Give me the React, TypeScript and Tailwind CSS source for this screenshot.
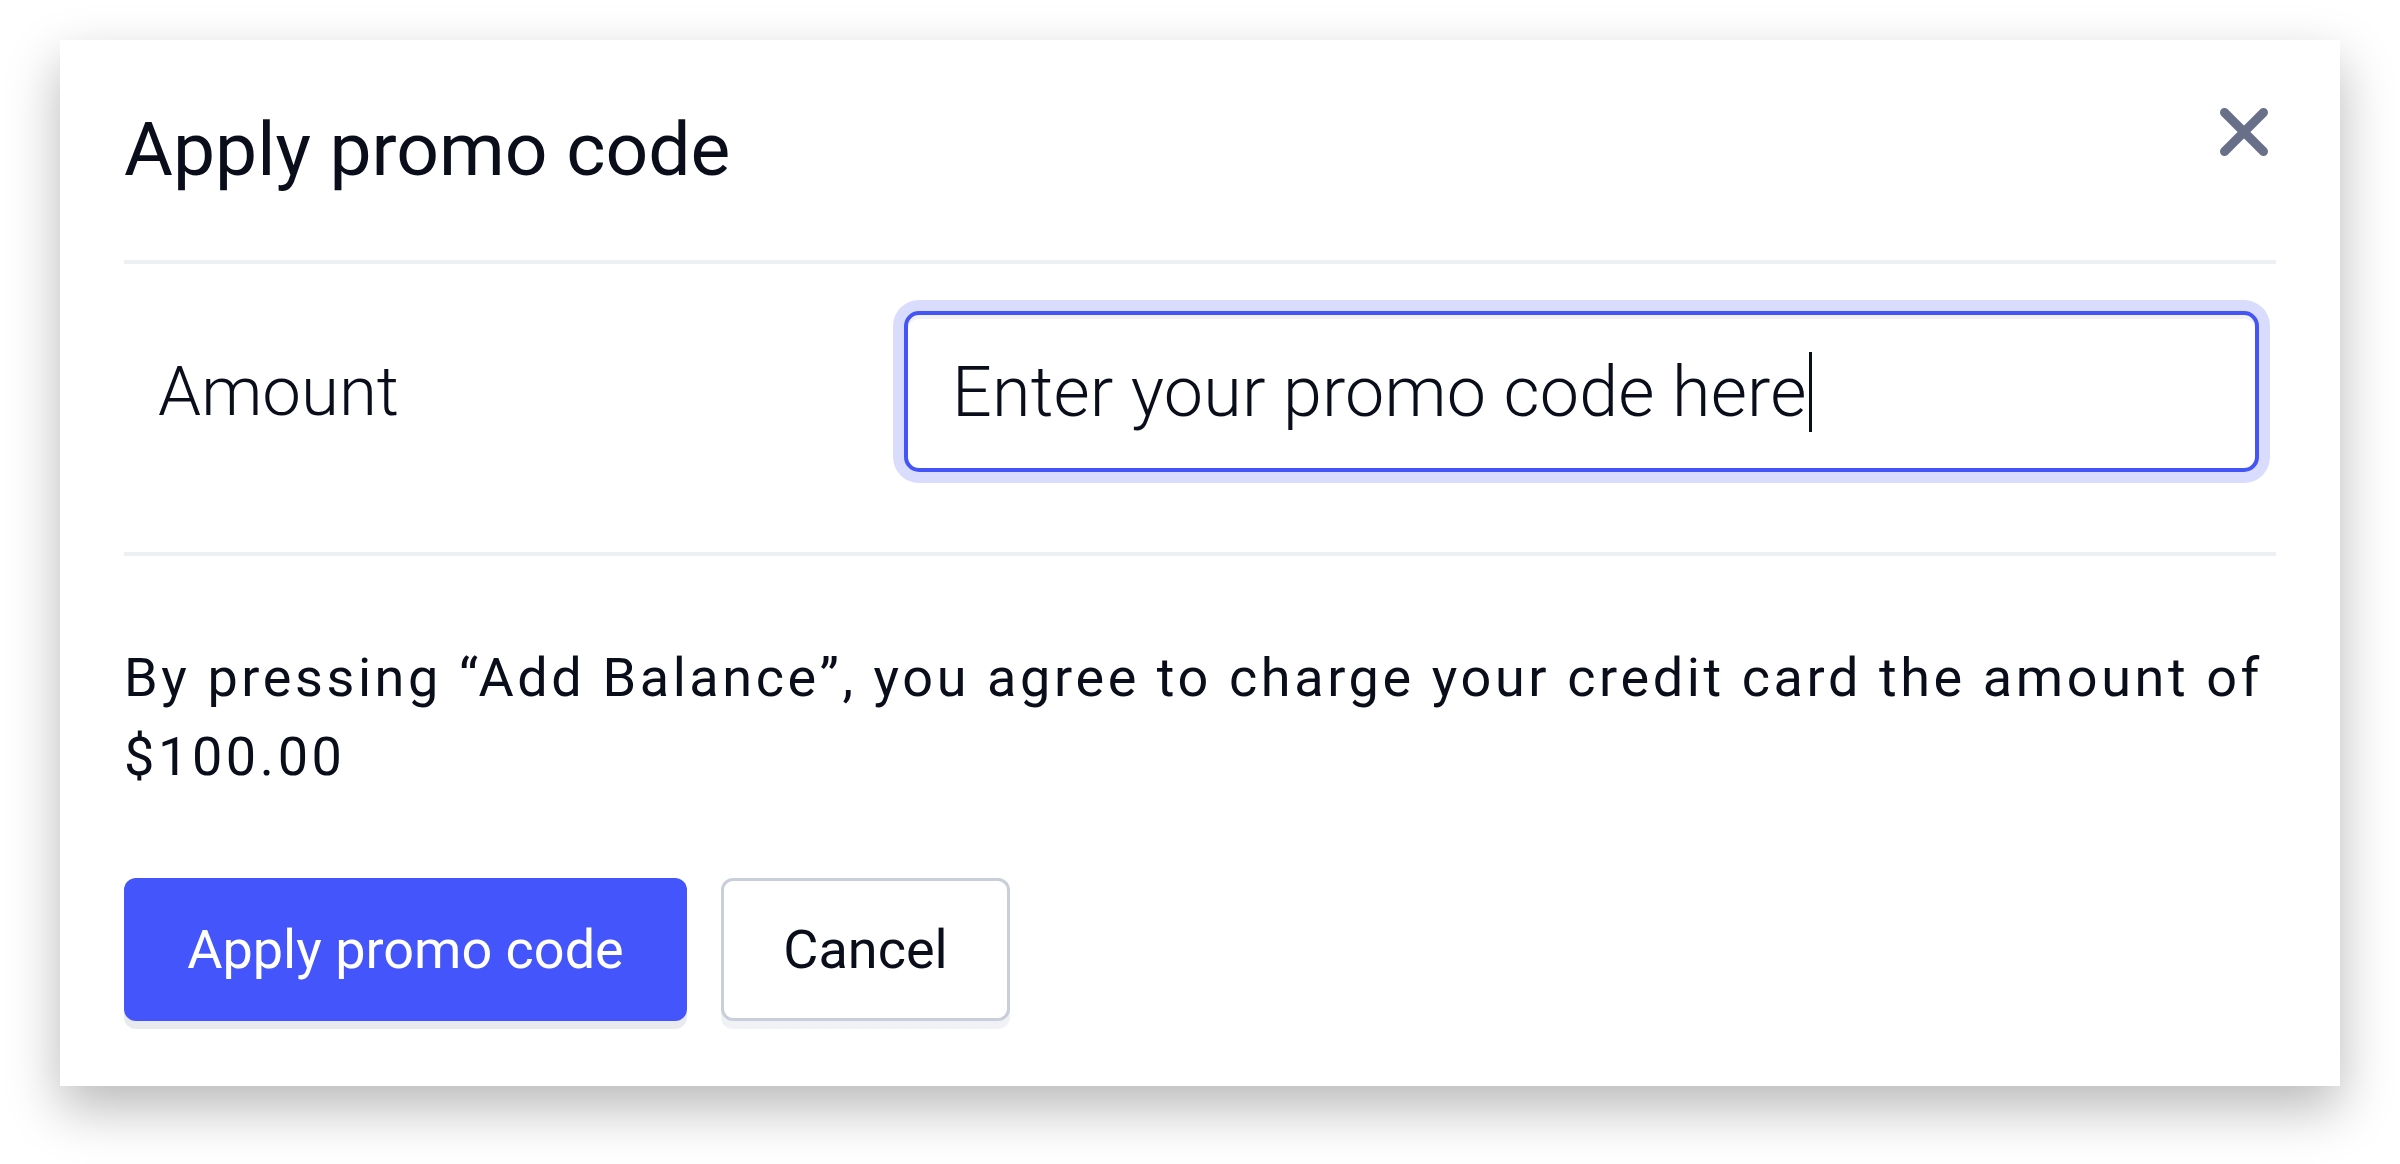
import React from 'react';

function CloseIcon() {
  return (
    <svg width="48" height="48" viewBox="0 0 48 48" fill="none" aria-hidden="true">
      <path d="M4.5 4.5L43.5 43.5M43.5 4.5L4.5 43.5" stroke="#687089" strokeWidth="9" strokeLinecap="round" />
    </svg>
  );
}

export default function App() {
  return (
    <div className="min-h-screen bg-white px-[60px] pt-[40px] pb-[80px] font-['Roboto',sans-serif] text-[#0a0d1a]">
      <div className="bg-white shadow-[0_22px_50px_rgba(0,0,0,0.28)] px-[64px] pb-[65px]">
        {/* header */}
        <div className="flex items-start justify-between pt-[64px] pb-[65px]">
          <h2 className="text-[75px] leading-[91px] font-normal">Apply promo code</h2>
          <button className="mt-[4px] mr-[8px]" aria-label="Close">
            <CloseIcon />
          </button>
        </div>
        <div className="h-[4px] bg-[#eeeff4]" />

        {/* promo code row */}
        <div className="flex items-center pt-[47px] pb-[80px]">
          <label className="w-[780px] shrink-0 pl-[34px] text-[69px] font-light">Amount</label>
          <div className="flex-1 mr-[17px] h-[161px] flex items-center rounded-[15px] border-[4px] border-[#4455f5] bg-white pl-[44px] ring-[11px] ring-[#d9dcfc] shadow-[inset_0_4px_0_#f2f2f4]">
            <span className="text-[70px] font-light leading-none tracking-[0.2px]">Enter your promo code here</span>
            <span className="ml-[2px] h-[80px] w-[3px] bg-[#0a0d1a]" />
          </div>
        </div>
        <div className="h-[4px] bg-[#eeeff4]" />

        {/* notice */}
        <p className="pt-[82px] text-[54px] leading-[79px] tracking-[3.6px]">
          By pressing “Add Balance”, you agree to charge your credit card the amount of $100.00
        </p>

        {/* actions */}
        <div className="flex gap-[34px] pt-[82px]">
          <button className="w-[563px] h-[143px] rounded-[12px] bg-[#4455fb] text-white text-[54px] shadow-[0_8px_0_#e9eaee]">
            Apply promo code
          </button>
          <button className="w-[289px] h-[143px] rounded-[12px] border-[3px] border-[#c9cedb] bg-white text-[54px] text-[#0a0d1a] shadow-[0_8px_0_#f1f2f5]">
            Cancel
          </button>
        </div>
      </div>
    </div>
  );
}
